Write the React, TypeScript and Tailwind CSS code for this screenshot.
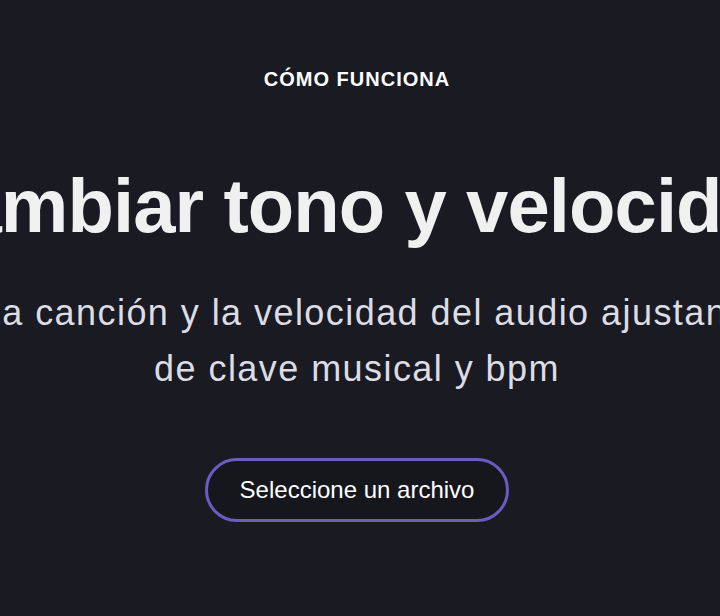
export default function App() {
  return (
    <div
      className="w-full h-[616px] overflow-hidden bg-[#191a22] text-white"
      style={{ fontFamily: '"Liberation Sans", Arial, sans-serif' }}
    >
      <section className="flex flex-col items-center pr-[6px] pt-[65px]">
        <p className="text-xl leading-7 font-bold tracking-wider text-white whitespace-nowrap">
          CÓMO FUNCIONA
        </p>

        <h1 className="mt-[75px] text-[76px] leading-none font-bold tracking-[-0.012em] text-[#f0f0f0] whitespace-nowrap">
          Cambiar tono y velocidad
        </h1>

        <p className="mt-[41px] text-4xl leading-[56px] tracking-[0.04em] text-[#dcdce4] text-center whitespace-nowrap">
          <span className="block">
            Cambiar el tono de la canción y la velocidad del audio ajustando los deslizadores
          </span>
          <span className="block">de clave musical y bpm</span>
        </p>

        <button className="mt-[61px] h-16 px-8 rounded-full border-[3px] border-[#6a5cc2] bg-[#16161d] text-2xl text-white whitespace-nowrap">
          Seleccione un archivo
        </button>
      </section>
    </div>
  )
}
